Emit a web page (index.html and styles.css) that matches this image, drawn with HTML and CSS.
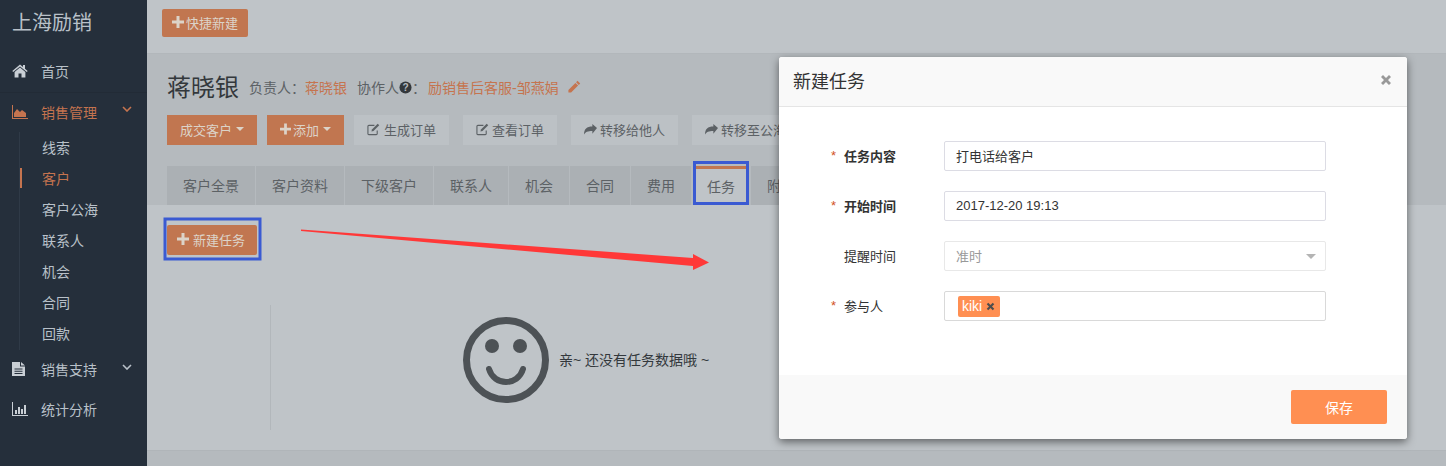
FILE: index.html
```html
<!DOCTYPE html>
<html lang="en">
<head>
    <meta charset="UTF-8">
    <title>上海励销</title>
    <link rel="stylesheet" href="styles.css">
</head>
<body>
    <div class="sidebar">
        <div class="logo">上海励销</div>
        <a class="nav-item">
            <svg class="nav-icon" viewBox="0 0 16 14"><path d="M8 .5.3 7l.9 1L8 2.4 14.8 8l.9-1L13 4.7V1h-2v2zM8 3.6 2.6 8.1v5.4h3.9v-4h3v4h3.9V8.1z"/></svg>
            首页
        </a>
        <a class="nav-item nav-active">
            <svg class="nav-icon" viewBox="0 0 16 14"><path d="M0 0h1v13h15v1H0zM2 12V8l3-4 3 3 2-2 4 3v4z"/></svg>
            销售管理
            <svg class="chevron" viewBox="0 0 10 6"><path d="M1 1l4 4 4-4" /></svg>
        </a>
        <div class="sub-nav">
            <a class="sub-item">线索</a>
            <a class="sub-item sub-active">客户</a>
            <a class="sub-item">客户公海</a>
            <a class="sub-item">联系人</a>
            <a class="sub-item">机会</a>
            <a class="sub-item">合同</a>
            <a class="sub-item">回款</a>
        </div>
        <a class="nav-item">
            <svg class="nav-icon" viewBox="0 0 16 14"><path fill-rule="evenodd" d="M0 0h8v4.500h5V14H0zM9 0l4 3.500H9zM2.500 6.500v1H10.500v-1zM2.500 8.700v1H10.500v-1zM2.500 10.900v1H10.500v-1z"/></svg>
            销售支持
            <svg class="chevron" viewBox="0 0 10 6"><path d="M1 1l4 4 4-4" /></svg>
        </a>
        <a class="nav-item">
            <svg class="nav-icon" viewBox="0 0 16 14"><path d="M0 0h1v13h15v1H0zM3 8h2v4H3zM6 5h2v7H6zM9 7h2v5H9zM12 3h2v9h-2z"/></svg>
            统计分析
        </a>
    </div>

    <div class="main">
        <div class="topbar">
            <button class="btn btn-orange btn-round">
                <svg class="icon" viewBox="0 0 12 12"><path d="M4.500 0h3v4.500H12v3H7.500V12h-3V7.500H0v-3h4.500z"/></svg>
                快捷新建
            </button>
        </div>

        <div class="head">
            <div class="title-row">
                <h1>蒋晓银</h1>
                <span class="meta">负责人：<a class="link">蒋晓银</a></span>
                <span class="meta meta-second">协作人<svg class="help" viewBox="0 0 14 14"><circle cx="7" cy="7" r="6.500"/><text x="7" y="10.500" text-anchor="middle">?</text></svg>：</span>
                <a class="link link-team">励销售后客服-邹燕娟</a>
                <svg class="pencil" viewBox="0 0 14 14"><path d="M10.500.8l2.700 2.700-1.400 1.400-2.700-2.700zM8.400 2.900l2.700 2.700-7 7H1.400V9.900z"/></svg>
            </div>
            <div class="actions">
                <button class="btn btn-orange">成交客户<span class="caret"></span></button>
                <button class="btn btn-orange">
                    <svg class="icon" viewBox="0 0 12 12"><path d="M4.500 0h3v4.500H12v3H7.500V12h-3V7.500H0v-3h4.500z"/></svg>
                    添加<span class="caret"></span>
                </button>
                <button class="btn btn-light btn-order">
                    <svg class="icon icon-edit" viewBox="0 0 14 14"><path class="edit-box" d="M11 8v3.500a1 1 0 0 1-1 1H2a1 1 0 0 1-1-1v-8a1 1 0 0 1 1-1h6"/><path d="M11.500.8l1.700 1.700L7 8.700l-2.200.5.500-2.200z"/></svg>
                    生成订单
                </button>
                <button class="btn btn-light btn-wide-gap">
                    <svg class="icon icon-edit" viewBox="0 0 14 14"><path class="edit-box" d="M11 8v3.500a1 1 0 0 1-1 1H2a1 1 0 0 1-1-1v-8a1 1 0 0 1 1-1h6"/><path d="M11.500.8l1.700 1.700L7 8.700l-2.200.5.500-2.200z"/></svg>
                    查看订单
                </button>
                <button class="btn btn-light btn-wide-gap">
                    <svg class="icon" viewBox="0 0 14 12"><path d="M14 4.500 9 0v2.800C3 2.800 0 5.500 0 11.500c1.500-3 4-4 9-4v3z"/></svg>
                    转移给他人
                </button>
                <button class="btn btn-light btn-wide-gap">
                    <svg class="icon" viewBox="0 0 14 12"><path d="M14 4.500 9 0v2.800C3 2.800 0 5.500 0 11.500c1.500-3 4-4 9-4v3z"/></svg>
                    转移至公海
                </button>
            </div>
            <div class="tabs">
                <a class="tab">客户全景</a>
                <a class="tab">客户资料</a>
                <a class="tab">下级客户</a>
                <a class="tab">联系人</a>
                <a class="tab">机会</a>
                <a class="tab">合同</a>
                <a class="tab">费用</a>
                <a class="tab tab-active">任务</a>
                <a class="tab">附件</a>
            </div>
        </div>

        <div class="content">
            <button class="btn btn-orange btn-round btn-new">
                <svg class="icon" viewBox="0 0 12 12"><path d="M4.500 0h3v4.500H12v3H7.500V12h-3V7.500H0v-3h4.500z"/></svg>
                新建任务
            </button>
            <div class="empty">
                <svg class="smile" viewBox="0 0 86 86">
                    <circle class="smile-line" cx="43" cy="43" r="39.500"/>
                    <circle class="smile-eye" cx="29" cy="29" r="7"/>
                    <circle class="smile-eye" cx="57" cy="29" r="7"/>
                    <path class="smile-mouth" d="M26 52c5 17.300 29 17.300 34 0"/>
                </svg>
                <span class="empty-text">亲~ 还没有任务数据哦 ~</span>
            </div>
        </div>

        <div class="footer"></div>
    </div>

    <!-- annotations drawn on top of the screenshot -->
    <svg class="marks" viewBox="0 0 1446 466">
        <rect x="694.500" y="162.500" width="53" height="41"/>
        <rect x="165" y="219" width="95" height="40"/>
        <polygon points="301,229.500 693,258 693,254 709,262.500 693,270 693,266 301,231"/>
    </svg>

    <div class="modal">
        <div class="modal-head">
            <span class="modal-title">新建任务</span>
            <svg class="close" viewBox="0 0 12 12"><path d="M1 3l2-2 3 3 3-3 2 2-3 3 3 3-2 2-3-3-3 3-2-2 3-3z"/></svg>
        </div>
        <div class="modal-body">
            <div class="form-row">
                <span class="star">*</span>
                <label class="form-label label-bold">任务内容</label>
                <input class="field" type="text" value="打电话给客户">
            </div>
            <div class="form-row">
                <span class="star">*</span>
                <label class="form-label label-bold">开始时间</label>
                <input class="field" type="text" value="2017-12-20 19:13">
            </div>
            <div class="form-row">
                <span class="star"></span>
                <label class="form-label">提醒时间</label>
                <div class="field field-select">准时<span class="select-caret"></span></div>
            </div>
            <div class="form-row">
                <span class="star">*</span>
                <label class="form-label">参与人</label>
                <div class="field field-tags">
                    <span class="tag">kiki
                        <svg class="tag-x" viewBox="0 0 12 12"><path d="M1 3l2-2 3 3 3-3 2 2-3 3 3 3-2 2-3-3-3 3-2-2 3-3z"/></svg>
                    </span>
                </div>
            </div>
        </div>
        <div class="modal-foot">
            <button class="btn-save">保存</button>
        </div>
    </div>
</body>
</html>
```

FILE: styles.css
```css
* {
    box-sizing: border-box;
}
html, body {
    height: 466px;
    margin: 0;
    overflow: hidden;
}
body {
    display: flex;
    position: relative;
    font-family: "Liberation Sans", "Noto Sans CJK SC", sans-serif;
    font-size: 14px;
    color: #33383c;
    background-color: #bfc4c8;
}

/* sidebar */
.sidebar {
    width: 147px;
    flex-shrink: 0;
    background-color: #252f3b;
    color: #b9c1c9;
}
.logo {
    height: 46px;
    padding-left: 12px;
    font-size: 20px;
    line-height: 46px;
    margin-bottom: 6px;
}
.nav-item {
    display: flex;
    align-items: center;
    height: 40px;
    padding: 0 15px 2px 12px;
    position: relative;
}
.nav-icon {
    width: 16px;
    height: 14px;
    margin-right: 13px;
    fill: #c9cfd5;
}
.nav-active {
    color: #c5744f;
    border-top: 1px solid #222b36;
}
.nav-active .nav-icon {
    fill: #c5744f;
}
.chevron {
    width: 10px;
    height: 6px;
    margin-left: auto;
    margin-bottom: 5px;
    fill: none;
    stroke: #b9c1c9;
    stroke-width: 1.6;
}
.nav-active .chevron {
    stroke: #c5744f;
}
.sub-nav {
    margin-left: 19px;
    border-left: 1px solid #2f3a47;
    padding-bottom: 1px;
}
.sub-item {
    display: flex;
    align-items: center;
    height: 31px;
    padding: 0 0 2px 22px;
    position: relative;
}
.sub-active {
    color: #c5744f;
}
.sub-active::before {
    content: "";
    position: absolute;
    left: 0;
    top: 5px;
    width: 2px;
    height: 20px;
    background-color: #c5744f;
}

/* main column */
.main {
    flex: 1;
    display: flex;
    flex-direction: column;
    min-width: 0;
}
.topbar {
    height: 54px;
    padding: 9px 15px;
    border-bottom: 1px solid #b2b7bb;
}
.head {
    height: 151px;
    padding: 16px 0 0 20px;
    background-color: #b5babe;
    overflow: hidden;
}
.title-row {
    display: flex;
    align-items: center;
    height: 34px;
    color: #5c6165;
}
h1 {
    margin: 0 10px 4px 0;
    font-size: 24px;
    font-weight: normal;
    color: #33383c;
}
.link {
    color: #c5744f;
}
.meta-second {
    margin-left: 10px;
    display: flex;
    align-items: center;
}
.help {
    width: 13px;
    height: 13px;
    fill: #33383c;
}
.help text {
    fill: #b5babe;
    font-size: 11px;
    font-weight: bold;
}
.link-team {
    margin-left: 2px;
}
.pencil {
    width: 14px;
    height: 14px;
    margin-left: 8px;
    fill: #c5744f;
}

/* buttons */
.btn {
    display: inline-flex;
    align-items: center;
    flex-shrink: 0;
    height: 30px;
    padding: 0 13px 2px;
    border: none;
    font-family: inherit;
    font-size: 13px;
    white-space: nowrap;
}
.btn-orange {
    background-color: #c17650;
    color: #dcd3c8;
}
.btn-light {
    background-color: #bcc1c5;
    color: #5c6165;
}
.btn-round {
    border-radius: 2px;
    padding: 0 10px 2px;
}
.icon {
    width: 12px;
    height: 12px;
    margin-right: 2px;
    fill: currentColor;
}
.actions .btn-orange .icon {
    width: 11px;
}
.btn-light .icon {
    width: 13px;
    height: 13px;
    margin-right: 3px;
    fill: #5c6165;
}
.btn-light.btn-order .icon {
    margin-right: 4px;
}
.icon-edit .edit-box {
    fill: none;
    stroke: #5c6165;
    stroke-width: 1.2;
}
.caret {
    width: 0;
    height: 0;
    margin-left: 4px;
    border-left: 4px solid transparent;
    border-right: 4px solid transparent;
    border-top: 4px solid currentColor;
}
.actions {
    display: flex;
    gap: 10px;
    margin-top: 11px;
}
.btn-wide-gap {
    margin-left: 4px;
}
.topbar .btn {
    height: 28px;
}

/* tabs */
.tabs {
    display: flex;
    gap: 1px;
    margin-top: 21px;
}
.tab {
    flex-shrink: 0;
    height: 40px;
    padding: 0 16px;
    line-height: 40px;
    background-color: #abb0b4;
    color: #5c6165;
}
.tab-active {
    margin: 0 1px;
    padding: 0 14px;
    background-color: #bfc4c8;
    border-top: 3px solid #c17650;
    line-height: 37px;
}

/* content */
.content {
    flex: 1;
    padding: 20px 0 0 20px;
}
.btn-new {
    width: 90px;
}
.btn-new .icon {
    margin-right: 4px;
}
.empty {
    display: flex;
    align-items: flex-start;
    height: 125px;
    margin: 50px 0 0 103px;
    padding: 12px 0 0 192px;
    border-left: 1px solid #b2b7bb;
}
.smile {
    width: 86px;
    height: 86px;
    flex-shrink: 0;
}
.smile-line {
    fill: none;
    stroke: #4d5256;
    stroke-width: 7;
}
.smile-mouth {
    fill: none;
    stroke: #4d5256;
    stroke-width: 6;
    stroke-linecap: round;
}
.smile-eye {
    fill: #4d5256;
}
.empty-text {
    margin: 32px 0 0 10px;
    white-space: nowrap;
}
.footer {
    height: 16px;
    background-color: #b5babe;
    border-top: 1px solid #b0b5b9;
}

/* annotations */
.marks {
    position: absolute;
    left: 0;
    top: 0;
    width: 1446px;
    height: 466px;
    pointer-events: none;
}
.marks rect {
    fill: none;
    stroke: #3a5ad2;
    stroke-width: 3;
}
.marks polygon {
    fill: #ff3838;
}

/* modal */
.modal {
    position: absolute;
    left: 779px;
    top: 57px;
    width: 628px;
    height: 382px;
    display: flex;
    flex-direction: column;
    background-color: #fff;
    border-radius: 3px;
    box-shadow: 0 3px 9px rgba(0, 0, 0, .5);
}
.modal-head {
    display: flex;
    align-items: center;
    justify-content: space-between;
    height: 50px;
    padding: 0 15px 3px 14px;
    background-color: #f9f9f9;
    border-bottom: 1px solid #e5e5e5;
    border-radius: 3px 3px 0 0;
}
.modal-title {
    font-size: 18px;
    color: #333;
}
.close {
    width: 12px;
    height: 12px;
    fill: #999;
}
.modal-body {
    flex: 1;
    display: flex;
    flex-direction: column;
    gap: 20px;
    padding: 34px 0 0 52px;
}
.form-row {
    display: flex;
    align-items: center;
    height: 30px;
}
.star {
    width: 13px;
    color: #d2521e;
    font-size: 13px;
    padding-bottom: 2px;
}
.form-label {
    width: 100px;
    padding-bottom: 2px;
    color: #333;
    font-size: 13px;
}
.label-bold {
    font-weight: bold;
}
.field {
    width: 382px;
    height: 30px;
    padding: 0 11px 2px;
    border: 1px solid #dcdce4;
    border-radius: 2px;
    font-family: inherit;
    font-size: 13px;
    color: #333;
    outline: none;
}
.field-select {
    display: flex;
    align-items: center;
    justify-content: space-between;
    border-color: #e8e8e8;
    color: #999;
    padding-right: 9px;
}
.select-caret {
    margin-top: 2px;
    border-left: 5px solid transparent;
    border-right: 5px solid transparent;
    border-top: 5px solid #b4b4b4;
}
.field-tags {
    display: flex;
    align-items: center;
    padding: 0 13px;
    border-color: #d9d9d9;
}
.tag {
    display: inline-flex;
    align-items: center;
    gap: 4px;
    height: 21px;
    padding: 0 5px 0 4px;
    background-color: #ff8f52;
    color: #fff;
    border-radius: 2px;
    font-size: 14px;
}
.tag-x {
    width: 9px;
    height: 9px;
    fill: #4d4d4d;
}
.modal-foot {
    display: flex;
    justify-content: flex-end;
    height: 64px;
    padding: 15px 20px 0 0;
    background-color: #f9f9f9;
    border-radius: 0 0 3px 3px;
}
.btn-save {
    width: 96px;
    height: 34px;
    border: none;
    border-radius: 2px;
    background-color: #ff8f52;
    color: #fff;
    font-family: inherit;
    font-size: 14px;
}
```
